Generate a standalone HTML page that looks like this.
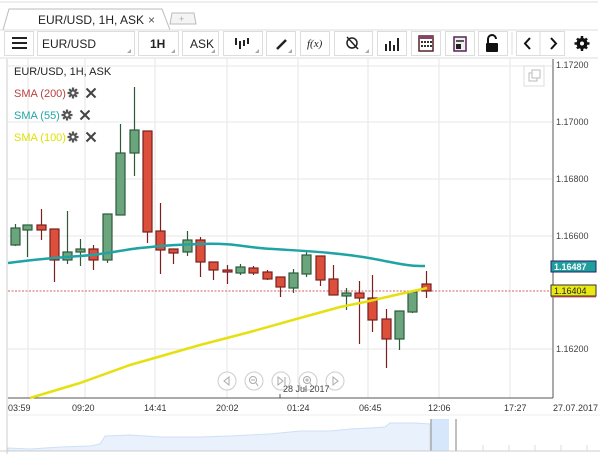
<!DOCTYPE html>
<html><head><meta charset="utf-8"><style>
html,body{margin:0;padding:0;background:#fff;width:600px;height:454px;overflow:hidden;font-family:"Liberation Sans",sans-serif}
</style></head><body>
<svg width="600" height="454" viewBox="0 0 600 454" xmlns="http://www.w3.org/2000/svg" font-family="Liberation Sans, sans-serif">
<defs>
<g id="gear"><circle cx="0" cy="0" r="3.6" fill="#555"/><g stroke="#555" stroke-width="2.2"><line x1="0" y1="-5.5" x2="0" y2="5.5"/><line x1="-5.5" y1="0" x2="5.5" y2="0"/><line x1="-3.9" y1="-3.9" x2="3.9" y2="3.9"/><line x1="3.9" y1="-3.9" x2="-3.9" y2="3.9"/></g><circle cx="0" cy="0" r="1.5" fill="#fff"/></g>
<g id="xx" stroke="#444" stroke-width="2"><line x1="-4.5" y1="-4.5" x2="4.5" y2="4.5"/><line x1="4.5" y1="-4.5" x2="-4.5" y2="4.5"/></g>
</defs>
<rect width="600" height="454" fill="#fff"/>
<line x1="0" y1="2" x2="598" y2="2" stroke="#ddd"/>
<path d="M3,30 L9,9 L162,9 L170,30" fill="#fff" stroke="#bbb"/>
<text x="38" y="24" font-size="12" fill="#222">EUR/USD, 1H, ASK</text>
<text x="148" y="24" font-size="12" fill="#555">×</text>
<path d="M170,24 L172,13 L194,13 L196,24 Z" fill="#f4f4f4" stroke="#bbb"/>
<text x="179" y="22" font-size="9" fill="#aaa">+</text>
<line x1="0" y1="30" x2="598" y2="30" stroke="#ddd"/>
<g fill="#fff" stroke="#ddd">
<rect x="4.5" y="31.5" width="29" height="24"/>
<rect x="37.5" y="31.5" width="97" height="24"/>
<rect x="138.5" y="31.5" width="40" height="24"/>
<rect x="182.5" y="31.5" width="36" height="24"/>
<rect x="223.5" y="31.5" width="39" height="24"/>
<rect x="266.5" y="31.5" width="29" height="24"/>
<rect x="300.5" y="31.5" width="29" height="24"/>
<rect x="334.5" y="31.5" width="38" height="24"/>
<rect x="377.5" y="31.5" width="29" height="24"/>
<rect x="411.5" y="31.5" width="29" height="24"/>
<rect x="445.5" y="31.5" width="29" height="24"/>
<rect x="478.5" y="31.5" width="29" height="24"/>
<rect x="516.5" y="31.5" width="48" height="24"/>
</g>
<line x1="512" y1="32" x2="512" y2="55" stroke="#ddd"/>
<line x1="540" y1="32" x2="540" y2="55" stroke="#ddd"/>
<line x1="0" y1="58" x2="598" y2="58" stroke="#ddd"/>
<g stroke="#222" stroke-width="2"><line x1="12" y1="38" x2="27" y2="38"/><line x1="12" y1="43" x2="27" y2="43"/><line x1="12" y1="48" x2="27" y2="48"/></g>
<text x="42" y="48" font-size="12" fill="#222">EUR/USD</text>
<text x="150" y="48" font-size="12" font-weight="bold" fill="#222">1H</text>
<text x="190" y="48" font-size="12" fill="#222">ASK</text>
<g fill="#aaa"><path d="M131,53 L131,49 L127,53Z"/><path d="M175,53 L175,49 L171,53Z"/><path d="M215,53 L215,49 L211,53Z"/><path d="M259,53 L259,49 L255,53Z"/><path d="M292,53 L292,49 L288,53Z"/><path d="M369,53 L369,49 L365,53Z"/></g>
<g stroke="#222" stroke-width="2"><line x1="236" y1="38" x2="236" y2="45"/><line x1="240" y1="41" x2="240" y2="49"/><line x1="244" y1="40" x2="244" y2="46"/><line x1="248" y1="38" x2="248" y2="44"/></g>
<line x1="277" y1="49" x2="286" y2="40" stroke="#222" stroke-width="2.5"/>
<text x="307" y="47" font-size="11" font-style="italic" fill="#222" font-family="Liberation Serif,serif">f(x)</text>
<circle cx="352" cy="43" r="5" fill="none" stroke="#222" stroke-width="1.5"/><line x1="347" y1="37" x2="358" y2="49" stroke="#222" stroke-width="1.5"/>
<g fill="#222"><rect x="385" y="44" width="2" height="7"/><rect x="389" y="41" width="2" height="10"/><rect x="393" y="45" width="2" height="6"/><rect x="397" y="38" width="2" height="13"/></g>
<rect x="419" y="36" width="14" height="15" fill="#fff" stroke="#522" stroke-width="1.5"/><rect x="419" y="36" width="14" height="3" fill="#846"/>
<g fill="#333"><rect x="421" y="41" width="2" height="2"/><rect x="424" y="41" width="2" height="2"/><rect x="427" y="41" width="2" height="2"/><rect x="430" y="41" width="2" height="2"/><rect x="421" y="45" width="2" height="2"/><rect x="424" y="45" width="2" height="2"/><rect x="427" y="45" width="2" height="2"/><rect x="430" y="45" width="2" height="2"/></g>
<rect x="454" y="37" width="12" height="14" fill="#eee" stroke="#525" stroke-width="1.5"/><rect x="456" y="44" width="5" height="5" fill="#222"/><rect x="456" y="40" width="8" height="2" fill="#555"/>
<path d="M488,43 L488,39 A4,4 0 0 1 496,39" fill="none" stroke="#111" stroke-width="2"/><rect x="486" y="43" width="12" height="9" rx="1" fill="#111"/>
<path d="M530,38 L525,43.5 L530,49" fill="none" stroke="#111" stroke-width="2"/>
<path d="M551,38 L556,43.5 L551,49" fill="none" stroke="#111" stroke-width="2"/>
<circle cx="582" cy="43.5" r="5.5" fill="#111"/>
<g stroke="#111" stroke-width="2.5"><line x1="582" y1="36" x2="582" y2="51"/><line x1="574.5" y1="43.5" x2="589.5" y2="43.5"/><line x1="577" y1="38.5" x2="587" y2="48.5"/><line x1="587" y1="38.5" x2="577" y2="48.5"/></g>
<circle cx="582" cy="43.5" r="2" fill="#fff"/>
<line x1="7" y1="59" x2="7" y2="454" stroke="#ccc"/>
<g stroke="#ececec" stroke-width="1.3">
<line x1="8" y1="66" x2="552" y2="66"/><line x1="8" y1="122" x2="552" y2="122"/><line x1="8" y1="179" x2="552" y2="179"/><line x1="8" y1="236" x2="552" y2="236"/><line x1="8" y1="349" x2="552" y2="349"/>
<line x1="28" y1="59" x2="28" y2="398"/><line x1="85" y1="59" x2="85" y2="398"/><line x1="155" y1="59" x2="155" y2="398"/><line x1="227" y1="59" x2="227" y2="398"/><line x1="298" y1="59" x2="298" y2="398"/><line x1="368" y1="59" x2="368" y2="398"/><line x1="439" y1="59" x2="439" y2="398"/><line x1="510" y1="59" x2="510" y2="398"/>
</g>
<line x1="553" y1="59" x2="553" y2="398" stroke="#555"/>
<line x1="8" y1="398" x2="553" y2="398" stroke="#555"/>
<rect x="524" y="66" width="20" height="20" fill="#fff" stroke="#ddd"/>
<rect x="529" y="73" width="8" height="8" fill="none" stroke="#bbb"/><rect x="532" y="70" width="8" height="8" fill="#fff" stroke="#bbb"/>
<g font-size="9" fill="#444">
<text x="556" y="68">1.17200</text><text x="556" y="125">1.17000</text><text x="556" y="182">1.16800</text><text x="556" y="239">1.16600</text><text x="556" y="352">1.16200</text>
</g>
<text x="14" y="75" font-size="11" fill="#222">EUR/USD, 1H, ASK</text>
<text x="14" y="97" font-size="11" fill="#b84040">SMA (200)</text>
<text x="14" y="119" font-size="11" fill="#22a5a5">SMA (55)</text>
<text x="14" y="141" font-size="11" fill="#e0e000">SMA (100)</text>
<use href="#gear" x="73" y="93"/><use href="#xx" x="91" y="93"/>
<use href="#gear" x="67" y="115"/><use href="#xx" x="85" y="115"/>
<use href="#gear" x="73" y="137"/><use href="#xx" x="91" y="137"/>
<line x1="8" y1="291" x2="553" y2="291" stroke="#d06060" stroke-dasharray="2,1.5"/>
<g stroke-width="1.2">
<g stroke="#2d5a3a" fill="#6aa57e">
<line x1="15.5" y1="224" x2="15.5" y2="246"/><rect x="11" y="228" width="9" height="17"/>
<line x1="27.5" y1="225" x2="27.5" y2="257"/><rect x="23" y="225" width="9" height="5"/>
<line x1="67.5" y1="211" x2="67.5" y2="264"/><rect x="63" y="252" width="9" height="8"/>
<line x1="80.5" y1="239" x2="80.5" y2="266"/><rect x="76" y="249" width="9" height="3"/>
<line x1="107.5" y1="214" x2="107.5" y2="263"/><rect x="103" y="214" width="9" height="46"/>
<line x1="120.5" y1="124" x2="120.5" y2="215"/><rect x="116" y="153" width="9" height="62"/>
<line x1="134.5" y1="87" x2="134.5" y2="176"/><rect x="130" y="130" width="9" height="23"/>
<line x1="187.5" y1="231" x2="187.5" y2="256"/><rect x="183" y="240" width="9" height="12"/>
<line x1="240.5" y1="264" x2="240.5" y2="275"/><rect x="236" y="267" width="9" height="6"/>
<line x1="293.5" y1="269" x2="293.5" y2="293"/><rect x="289" y="273" width="9" height="15"/>
<line x1="306.5" y1="252" x2="306.5" y2="277"/><rect x="302" y="255" width="9" height="19"/>
<line x1="346.5" y1="288" x2="346.5" y2="310"/><rect x="342" y="293" width="9" height="3"/>
<line x1="399.5" y1="311" x2="399.5" y2="350"/><rect x="395" y="311" width="9" height="28"/>
<line x1="412.5" y1="292" x2="412.5" y2="313"/><rect x="408" y="292" width="9" height="20"/>
</g>
<g stroke="#7a2020" fill="#dc4f3a">
<line x1="41.5" y1="209" x2="41.5" y2="240"/><rect x="37" y="225" width="9" height="5"/>
<line x1="54.5" y1="229" x2="54.5" y2="282"/><rect x="50" y="229" width="9" height="31"/>
<line x1="93.5" y1="245" x2="93.5" y2="270"/><rect x="89" y="249" width="9" height="11"/>
<line x1="147.5" y1="131" x2="147.5" y2="243"/><rect x="143" y="131" width="9" height="101"/>
<line x1="160.5" y1="203" x2="160.5" y2="274"/><rect x="156" y="231" width="9" height="19"/>
<line x1="173.5" y1="249" x2="173.5" y2="264"/><rect x="169" y="249" width="9" height="4"/>
<line x1="200.5" y1="237" x2="200.5" y2="277"/><rect x="196" y="240" width="9" height="22"/>
<line x1="213.5" y1="262" x2="213.5" y2="280"/><rect x="209" y="262" width="9" height="8"/>
<line x1="227.5" y1="265" x2="227.5" y2="284"/><rect x="223" y="270" width="9" height="2"/>
<line x1="253.5" y1="266" x2="253.5" y2="275"/><rect x="249" y="268" width="9" height="5"/>
<line x1="267.5" y1="270" x2="267.5" y2="280"/><rect x="263" y="272" width="9" height="7"/>
<line x1="280.5" y1="277" x2="280.5" y2="297"/><rect x="276" y="277" width="9" height="10"/>
<line x1="320.5" y1="256" x2="320.5" y2="286"/><rect x="316" y="256" width="9" height="24"/>
<line x1="333.5" y1="265" x2="333.5" y2="295"/><rect x="329" y="279" width="9" height="16"/>
<line x1="359.5" y1="281" x2="359.5" y2="344"/><rect x="355" y="293" width="9" height="5"/>
<line x1="372.5" y1="275" x2="372.5" y2="332"/><rect x="368" y="298" width="9" height="22"/>
<line x1="386.5" y1="309" x2="386.5" y2="368"/><rect x="382" y="319" width="9" height="20"/>
<line x1="426.5" y1="271" x2="426.5" y2="298"/><rect x="422" y="284" width="9" height="7"/>
</g>
</g>
<path d="M8,263 C30,260 50,258 80,256 S120,250 140,248 S170,245 200,244 S240,246 260,248 S300,250 330,253 S370,258 390,262 S415,266 425,266" fill="none" stroke="#1fa3a3" stroke-width="2.5"/>
<path d="M30,398 L80,383 L130,365 L200,345 L250,332 L300,318 L340,307 L365,302 L400,294 L427,288" fill="none" stroke="#e6e010" stroke-width="2.5"/>
<rect x="551" y="261" width="45" height="11" fill="#1f9e9e" stroke="#226"/>
<text x="554" y="270" font-size="9" fill="#fff" font-weight="bold">1.16487</text>
<rect x="551" y="285" width="45" height="11" fill="#eaea10" stroke="#333"/>
<line x1="551" y1="297" x2="596" y2="297" stroke="#e06060"/>
<text x="554" y="294" font-size="9" fill="#222">1.16404</text>
<g fill="#fff" fill-opacity="0.7" stroke="#ccc"><circle cx="227" cy="381" r="9"/><circle cx="254" cy="381" r="9"/><circle cx="281" cy="381" r="9"/><circle cx="308" cy="381" r="9"/><circle cx="335" cy="381" r="9"/></g>
<g fill="none" stroke="#aaa"><path d="M229,377 L224,381 L229,385Z"/><circle cx="253" cy="380" r="3.5"/><line x1="256" y1="383" x2="258" y2="386"/><line x1="251" y1="380" x2="255" y2="380"/><path d="M278,377 L283,381 L278,385Z"/><line x1="285" y1="377" x2="285" y2="385"/><circle cx="307" cy="380" r="3.5"/><line x1="310" y1="383" x2="312" y2="386"/><line x1="305" y1="380" x2="309" y2="380"/><line x1="307" y1="378" x2="307" y2="382"/><path d="M333,377 L338,381 L333,385Z"/></g>
<text x="283" y="392" font-size="9" fill="#444">28 Jul 2017</text>
<line x1="280" y1="394" x2="280" y2="398" stroke="#555"/>
<g font-size="9" fill="#333">
<text x="8" y="411">03:59</text><text x="72" y="411">09:20</text><text x="144" y="411">14:41</text><text x="216" y="411">20:02</text><text x="287" y="411">01:24</text><text x="359" y="411">06:45</text><text x="428" y="411">12:06</text><text x="504" y="411">17:27</text><text x="553" y="411">27.07.2017</text>
</g>
<line x1="8" y1="415" x2="600" y2="415" stroke="#eee"/>
<path d="M8,451 L8,448 L30,449 L60,447 L90,446 L100,444 L105,436 L130,435 L160,437 L200,437 L230,436 L270,434 L300,431 L330,431 L350,429 L370,428 L385,427 L390,423 L415,423 L430,424 L430,451Z" fill="#e8f1fc" stroke="#cfe0f5"/>
<rect x="431" y="419" width="18" height="32" fill="#d6e6fb"/>
<line x1="431" y1="419" x2="431" y2="451" stroke="#aaa" stroke-width="1.5"/>
<line x1="456" y1="419" x2="456" y2="451" stroke="#aaa" stroke-width="1.5"/>
<g stroke="#ddd"><line x1="483" y1="445" x2="483" y2="451"/><line x1="509" y1="445" x2="509" y2="451"/><line x1="535" y1="445" x2="535" y2="451"/><line x1="561" y1="445" x2="561" y2="451"/><line x1="587" y1="445" x2="587" y2="451"/></g>
<line x1="0" y1="451" x2="600" y2="451" stroke="#ccc"/>
</svg>
</body></html>
